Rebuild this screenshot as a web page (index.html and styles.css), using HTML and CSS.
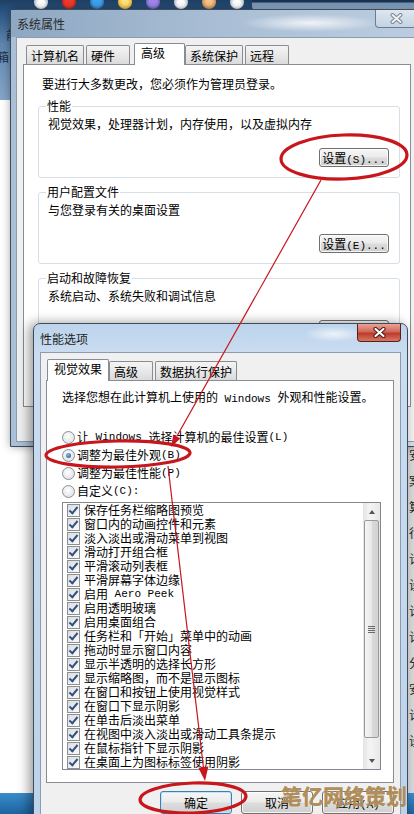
FILE: index.html
```html
<!DOCTYPE html>
<html lang="zh-CN">
<head>
    <meta charset="UTF-8">
    <meta name="viewport" content="width=device-width, initial-scale=1.0">
    <title>系统属性 - 性能选项</title>
    <link rel="stylesheet" href="styles.css">
</head>
<body>
<div class="screen">
    <div class="wallpaper">
        <div class="desk-icons">
            <span class="icon white"></span>
            <span class="icon red"></span>
            <span class="icon blue"></span>
            <span class="icon yellow"></span>
            <span class="icon purple"></span>
            <span class="icon white"></span>
            <span class="icon orange"></span>
            <span class="icon white"></span>
        </div>
        <div class="desk-text">
            <p class="c1">前</p>
            <p class="c2">箱</p>
        </div>
    </div>
    <div class="back-win"></div>
    <div class="side-win">
        <p>分</p><p>灯</p><p>安</p><p>案</p><p>算</p><p>行</p><p>计</p><p>设</p><p>计</p><p>计</p><p>分</p><p>安</p><p>计</p><p>设</p>
    </div>
    <div class="taskbar"></div>

    <!-- 系统属性 -->
    <section class="window sys-win">
        <header class="titlebar">
            <span class="title">系统属性</span>
            <span class="close">
                <svg width="13" height="11" viewBox="0 0 13 11"><path d="M2.5 2 L10.5 9 M10.5 2 L2.5 9" stroke="#7b8692" stroke-width="4" stroke-linecap="round"/><path d="M2.5 2 L10.5 9 M10.5 2 L2.5 9" stroke="#eef1f4" stroke-width="2" stroke-linecap="round"/></svg>
            </span>
        </header>
        <div class="client">
            <ul class="tabs">
                <li class="tab">计算机名</li>
                <li class="tab">硬件</li>
                <li class="tab active">高级</li>
                <li class="tab">系统保护</li>
                <li class="tab">远程</li>
            </ul>
            <div class="panel sys-panel">
                <p class="line note">要进行大多数更改，您必须作为管理员登录。</p>
                <fieldset class="group">
                    <legend>性能</legend>
                    <p class="line">视觉效果，处理器计划，内存使用，以及虚拟内存</p>
                    <div class="group-actions"><button class="btn small">设置<span class="en">(S)...</span></button></div>
                </fieldset>
                <fieldset class="group">
                    <legend>用户配置文件</legend>
                    <p class="line">与您登录有关的桌面设置</p>
                    <div class="group-actions"><button class="btn small">设置<span class="en">(E)...</span></button></div>
                </fieldset>
                <fieldset class="group">
                    <legend>启动和故障恢复</legend>
                    <p class="line">系统启动、系统失败和调试信息</p>
                    <div class="group-actions"><button class="btn small">设置<span class="en">(T)...</span></button></div>
                </fieldset>
            </div>
        </div>
    </section>

    <!-- 性能选项 -->
    <section class="window perf-win">
        <header class="titlebar">
            <span class="title">性能选项</span>
            <span class="close red">
                <svg width="13" height="11" viewBox="0 0 13 11"><path d="M2.5 2 L10.5 9 M10.5 2 L2.5 9" stroke="#4a1a16" stroke-width="4.2" stroke-linecap="round"/><path d="M2.5 2 L10.5 9 M10.5 2 L2.5 9" stroke="#ffffff" stroke-width="2.2" stroke-linecap="round"/></svg>
            </span>
        </header>
        <div class="client">
            <ul class="tabs">
                <li class="tab active">视觉效果</li>
                <li class="tab">高级</li>
                <li class="tab">数据执行保护</li>
            </ul>
            <div class="panel perf-panel">
                <p class="line">选择您想在此计算机上使用的<span class="en"> Windows </span>外观和性能设置。</p>
                <div class="radios">
                    <label class="option"><span class="radio"></span>让<span class="en"> Windows </span>选择计算机的最佳设置<span class="en">(L)</span></label>
                    <label class="option"><span class="radio checked"></span>调整为最佳外观<span class="en">(B)</span></label>
                    <label class="option"><span class="radio"></span>调整为最佳性能<span class="en">(P)</span></label>
                    <label class="option"><span class="radio"></span>自定义<span class="en">(C):</span></label>
                </div>
                <div class="listbox">
                    <ul class="checklist">
                        <li><span class="cb"></span>保存任务栏缩略图预览</li>
                        <li><span class="cb"></span>窗口内的动画控件和元素</li>
                        <li><span class="cb"></span>淡入淡出或滑动菜单到视图</li>
                        <li><span class="cb"></span>滑动打开组合框</li>
                        <li><span class="cb"></span>平滑滚动列表框</li>
                        <li><span class="cb"></span>平滑屏幕字体边缘</li>
                        <li><span class="cb"></span>启用<span class="en"> Aero Peek</span></li>
                        <li><span class="cb"></span>启用透明玻璃</li>
                        <li><span class="cb"></span>启用桌面组合</li>
                        <li><span class="cb"></span>任务栏和「开始」菜单中的动画</li>
                        <li><span class="cb"></span>拖动时显示窗口内容</li>
                        <li><span class="cb"></span>显示半透明的选择长方形</li>
                        <li><span class="cb"></span>显示缩略图，而不是显示图标</li>
                        <li><span class="cb"></span>在窗口和按钮上使用视觉样式</li>
                        <li><span class="cb"></span>在窗口下显示阴影</li>
                        <li><span class="cb"></span>在单击后淡出菜单</li>
                        <li><span class="cb"></span>在视图中淡入淡出或滑动工具条提示</li>
                        <li><span class="cb"></span>在鼠标指针下显示阴影</li>
                        <li><span class="cb"></span>在桌面上为图标标签使用阴影</li>
                    </ul>
                    <div class="scrollbar">
                        <span class="sb-btn up"></span>
                        <span class="sb-thumb"><i></i></span>
                        <span class="sb-track"></span>
                        <span class="sb-btn down"></span>
                    </div>
                </div>
            </div>
            <div class="dialog-buttons">
                <button class="btn default">确定</button>
                <button class="btn">取消</button>
                <button class="btn">应用<span class="en">(A)</span></button>
            </div>
        </div>
    </section>

    <!-- red annotations -->
    <svg class="marks" width="414" height="814" viewBox="0 0 414 814">
        <g fill="none" stroke="#c8161d" stroke-width="3.2">
            <ellipse cx="344" cy="157" rx="63" ry="22" transform="rotate(-2 344 157)"/>
            <ellipse cx="118" cy="454" rx="72" ry="13" transform="rotate(-1 118 454)"/>
            <ellipse cx="193" cy="798" rx="53" ry="15" transform="rotate(-2 193 798)"/>
        </g>
        <g stroke="#c8161d" stroke-width="1.2">
            <line x1="321" y1="180" x2="177" y2="436"/>
            <line x1="168" y1="466" x2="203.4" y2="767"/>
        </g>
        <g fill="#c8161d">
            <polygon points="171,447 180.4,438.5 173.4,434.6"/>
            <polygon points="205,781 208.4,766.5 198.4,767.7"/>
        </g>
    </svg>

    <div class="watermark">笔亿网络策划</div>
</div>
</body>
</html>
```

FILE: styles.css
```css
* {
    box-sizing: border-box;
}

body {
    margin: 0;
    background: #fff;
    font-family: "Noto Sans CJK SC", sans-serif;
    font-size: 12px;
    color: #000;
}

p {
    margin: 0;
}

.screen {
    position: relative;
    width: 414px;
    height: 814px;
    overflow: hidden;
    background: #fff;
}

/* desktop behind the windows */
.wallpaper {
    height: 100px;
    background: linear-gradient(180deg, #1f3f63 0, #28527e 10px, #5f87b0 45px, #86a6c6 100px);
}

.desk-icons {
    display: flex;
    gap: 14px;
    height: 10px;
    padding-left: 34px;
}

.icon {
    width: 14px;
    height: 14px;
    margin-top: -5px;
    border-radius: 50%;
}

.icon.white { background: radial-gradient(circle at 50% 60%, #fff 30%, #9aa7b5 80%); }
.icon.red { background: radial-gradient(circle, #f03a2a 40%, #9d1a12 90%); }
.icon.blue { background: radial-gradient(circle, #3fa1ea 40%, #1d5d9c 90%); }
.icon.yellow { background: radial-gradient(circle, #ffe27a 30%, #e4a91c 80%); }
.icon.purple { background: radial-gradient(circle, #9d86e8 40%, #5b46a8 90%); }
.icon.orange { background: radial-gradient(circle, #f6c38a 30%, #c27a35 85%); }

.desk-text {
    padding-top: 14px;
    color: #1c2c44;
    line-height: 22px;
}

.desk-text .c1 { margin-left: 6px; }
.desk-text .c2 { margin-left: -3px; }

.back-win {
    position: absolute;
    left: 252px;
    top: -20px;
    width: 190px;
    height: 32px;
    border-radius: 6px;
    background: linear-gradient(180deg, #1b3350 0, #1b3350 22px, #7393b6 23px, #a8bed5);
}

.side-win {
    position: absolute;
    left: 404px;
    top: 330px;
    width: 20px;
    height: 484px;
    padding: 60px 0 0 5px;
    background: #d6d8da;
    color: #222;
    line-height: 26px;
}

.taskbar {
    position: absolute;
    left: 0;
    bottom: 0;
    width: 414px;
    height: 21px;
    background: linear-gradient(180deg, #3b8ccb, #1c639f);
}

/* window chrome */
.window {
    position: absolute;
    display: flex;
    flex-direction: column;
    border: 1px solid #3d4b5b;
    border-radius: 7px 7px 0 0;
}

.titlebar {
    display: flex;
    align-items: center;
    padding-left: 6px;
    flex: none;
}

.title {
    flex: 1;
    color: #1e1e1e;
}

.close {
    align-self: flex-start;
    display: flex;
    align-items: center;
    justify-content: center;
    width: 42px;
    height: 18px;
    margin-right: 6px;
    border: 1px solid #6d7d8f;
    border-top: 0;
    border-radius: 0 0 4px 4px;
    background: linear-gradient(180deg, rgba(255, 255, 255, 0.55), rgba(255, 255, 255, 0.15));
}

.close.red {
    width: 44px;
    border-color: #5b1f1b;
    background: linear-gradient(180deg, #e9a497 0, #d0685a 45%, #bb3b2c 55%, #d77763 100%);
}

.client {
    flex: 1;
    display: flex;
    flex-direction: column;
    margin: 0 5px 4px;
    border: 1px solid #8b9bb0;
    background: #f0f0f0;
}

.sys-win {
    left: 10px;
    top: 9px;
    width: 414px;
    height: 438px;
    background: linear-gradient(90deg, #a9bfd6, #c6d5e5 30%, #d3deea);
    box-shadow: 0 0 8px rgba(0, 0, 0, 0.35);
}

.sys-win .titlebar {
    height: 27px;
    background: radial-gradient(ellipse 70px 9px at 300px 13px, rgba(255, 255, 255, 0.8), rgba(255, 255, 255, 0)),
        linear-gradient(90deg, #8ea7c2, #a9bed4 50%, #bccde0);
}

.sys-win .title {
    color: #2a2a2a;
}

.sys-win .client {
    padding: 5px 6px 34px;
}

.perf-win {
    left: 33px;
    top: 323px;
    width: 375px;
    height: 520px;
    background: linear-gradient(180deg, #bcd4ec, #cadcf0 30px, #bcd2ea);
    box-shadow: -4px 0 12px rgba(0, 0, 0, 0.4);
}

.perf-win .titlebar {
    height: 28px;
    background: radial-gradient(ellipse 30px 8px at 300px 10px, rgba(255, 255, 255, 0.7), rgba(255, 255, 255, 0));
}

.perf-win .client {
    margin: 0 6px;
    padding: 6px 6px 0 5px;
}

/* tabs */
.tabs {
    display: flex;
    align-items: flex-end;
    margin: 0;
    padding: 0 0 0 3px;
    list-style: none;
}

.tab {
    height: 19px;
    min-width: 44px;
    margin-right: 2px;
    padding: 2px 4px 0;
    border: 1px solid #898c95;
    border-bottom: 0;
    border-radius: 2px 2px 0 0;
    background: linear-gradient(180deg, #f4f4f4, #e6e6e6 60%, #dadada);
    line-height: 16px;
    white-space: nowrap;
}

.tab.active {
    position: relative;
    z-index: 1;
    height: 22px;
    min-width: 51px;
    margin: 0 0 -1px 2px;
    padding: 1px 6px 0;
    background: #fff;
}

.tab.active:first-child {
    margin-left: -2px;
}

.panel {
    background: #fff;
    border: 1px solid #898c95;
}

.line {
    line-height: 16px;
    white-space: nowrap;
}

.en {
    font-family: "Liberation Mono", monospace;
    font-size: 11px;
    line-height: 1;
    white-space: pre;
}

/* 系统属性 panel */
.sys-panel {
    flex: 1;
    padding: 11px 10px 0 14px;
}

.note {
    padding-left: 4px;
}

.group {
    min-width: 0;
    margin: 7px 0 0;
    padding: 3px 10px 10px 9px;
    border: 1px solid #d5dfe5;
    border-radius: 3px;
}

.group legend {
    margin-left: -2px;
    padding: 0 1px;
    line-height: 14px;
}

.group-actions {
    display: flex;
    justify-content: flex-end;
    margin-top: 16px;
}

/* buttons */
.btn {
    height: 23px;
    width: 72px;
    padding: 0;
    font-family: inherit;
    font-size: 12px;
    color: #000;
    border: 1px solid #707070;
    border-radius: 3px;
    background: linear-gradient(180deg, #f6f6f6 0, #ebebeb 48%, #dddddd 52%, #cfcfcf 100%);
    box-shadow: inset 0 0 0 1px rgba(255, 255, 255, 0.75);
    white-space: nowrap;
}

.btn.small {
    width: 70px;
    height: 19px;
}

.btn.default {
    border-color: #3c7fb1;
    box-shadow: inset 0 0 0 1px #bfe3f9;
}

/* 性能选项 panel */
.perf-panel {
    flex: none;
    padding: 8px 12px 12px 15px;
}

.radios {
    margin-top: 23px;
}

.option {
    display: flex;
    align-items: center;
    height: 18px;
    line-height: 16px;
    white-space: nowrap;
}

.radio {
    display: inline-grid;
    place-items: center;
    width: 13px;
    height: 13px;
    margin-right: 2px;
    border: 1px solid #8c8f94;
    border-radius: 50%;
    background: radial-gradient(circle at 45% 40%, #ffffff, #d6d9dd);
}

.radio.checked::after {
    content: "";
    width: 5px;
    height: 5px;
    border-radius: 50%;
    background: radial-gradient(circle at 40% 35%, #86bbe8, #1b4d85);
}

.listbox {
    display: flex;
    height: 268px;
    margin-top: 2px;
    border: 1px solid #828790;
}

.checklist {
    flex: 1;
    margin: 0;
    padding: 0 0 0 4px;
    list-style: none;
}

.checklist li {
    display: flex;
    align-items: center;
    height: 14px;
    line-height: 14px;
    white-space: nowrap;
}

.cb {
    display: grid;
    place-items: center;
    flex: none;
    width: 13px;
    height: 13px;
    margin-right: 4px;
    border: 1px solid #8e8f8f;
    background: linear-gradient(135deg, #d9dde2, #fbfbfb);
}

.cb::after {
    content: "";
    width: 3px;
    height: 7px;
    margin-top: -2px;
    border: solid #34507e;
    border-width: 0 2px 2px 0;
    transform: rotate(40deg);
}

.scrollbar {
    display: flex;
    flex-direction: column;
    width: 17px;
    background: linear-gradient(90deg, #e3e3e3, #f4f4f4 40%, #e8e8e8);
}

.sb-btn {
    display: flex;
    align-items: center;
    justify-content: center;
    height: 17px;
}

.sb-btn::before {
    content: "";
    border-left: 3.5px solid transparent;
    border-right: 3.5px solid transparent;
}

.sb-btn.up::before {
    border-bottom: 4px solid #555;
}

.sb-btn.down::before {
    border-top: 4px solid #555;
}

.sb-thumb {
    display: flex;
    align-items: center;
    justify-content: center;
    height: 218px;
    margin: 0 1px;
    border: 1px solid #9a9a9a;
    border-radius: 2px;
    background: linear-gradient(90deg, #f5f5f5, #e8e8e8 50%, #dadada 51%, #d2d2d2);
}

.sb-thumb i {
    width: 7px;
    height: 7px;
    background: repeating-linear-gradient(180deg, #6b6b6b 0, #6b6b6b 1px, transparent 1px, transparent 2px);
}

.sb-track {
    flex: 1;
}

.dialog-buttons {
    display: flex;
    justify-content: flex-end;
    gap: 9px;
    margin-top: 8px;
}

/* overlays */
.marks {
    position: absolute;
    left: 0;
    top: 0;
    pointer-events: none;
}

.watermark {
    position: absolute;
    left: 281px;
    top: 781px;
    font-size: 21px;
    font-weight: 900;
    line-height: 28px;
    color: rgba(166, 128, 70, 0.9);
    text-shadow: 0 0 1px rgba(255, 255, 255, 0.7);
    white-space: nowrap;
}
```
